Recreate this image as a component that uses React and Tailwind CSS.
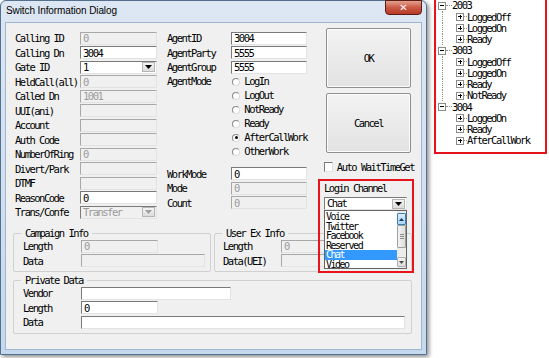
import React from "react";

const FONT = "font-['DejaVu_Sans_Mono',monospace] text-[10.5px] tracking-[-1.5px] leading-none";

// sunken text box
const Field = ({ value = "", disabled, w = "w-[77px]" }) => (
  <div
    className={`${w} h-[13px] flex items-center pl-[2px] border border-[#7a7a7a] border-b-[#e3e3e3] border-r-[#e3e3e3] ${
      disabled ? "bg-[#f0f0f0] text-[#9a9a9a] border-[#a8a8a8]" : "bg-white text-black"
    }`}
  >
    {value}
  </div>
);

const Arrow = ({ disabled }) => (
  <svg width="7" height="4" viewBox="0 0 7 4">
    <polygon points="0,0 7,0 3.5,4" fill={disabled ? "#a0a0a0" : "#000"} />
  </svg>
);

const Combo = ({ value, disabled, w = "w-[77px]" }) => (
  <div
    className={`${w} h-[13px] flex items-center justify-between pl-[2px] pr-[1px] border border-[#7a7a7a] border-b-[#e3e3e3] border-r-[#e3e3e3] ${
      disabled ? "bg-[#f0f0f0] text-[#9a9a9a]" : "bg-white text-black"
    }`}
  >
    <span>{value}</span>
    <div className="w-[13px] h-[10px] flex items-center justify-center bg-gradient-to-b from-[#f4f4f4] to-[#dcdcdc] border border-[#b5b5b5]">
      <Arrow disabled={disabled} />
    </div>
  </div>
);

const Radio = ({ label, checked }) => (
  <div className="h-[14px] flex items-center">
    <div className="ml-[2px] w-[8px] h-[8px] rounded-full bg-white border border-[#8a8a8a] border-b-[#dcdcdc] border-r-[#dcdcdc] flex items-center justify-center">
      {checked && <div className="w-[3px] h-[3px] rounded-full bg-black" />}
    </div>
    <span className="ml-[4px]">{label}</span>
  </div>
);

const leftRows = [
  { label: "Calling ID", value: "0", disabled: true },
  { label: "Calling Dn", value: "3004" },
  { label: "Gate ID", value: "1", combo: true },
  { label: "HeldCall(all)", value: "0", disabled: true },
  { label: "Called Dn", value: "1001", disabled: true },
  { label: "UUI(ani)", disabled: true },
  { label: "Account", disabled: true },
  { label: "Auth Code", disabled: true },
  { label: "NumberOfRing", value: "0", disabled: true },
  { label: "Divert/Park", disabled: true },
  { label: "DTMF", disabled: true },
  { label: "ReasonCode", value: "0" },
  { label: "Trans/Confe", value: "Transfer", combo: true, disabled: true },
];

const channels = ["Voice", "Twitter", "Facebook", "Reserved", "Chat", "Video"];

const tree = [
  { id: "2003", items: ["LoggedOff", "LoggedOn", "Ready"] },
  { id: "3003", items: ["LoggedOff", "LoggedOn", "Ready", "NotReady"] },
  { id: "3004", items: ["LoggedOn", "Ready", "AfterCallWork"] },
];

const TreeBox = ({ open }) => (
  <div className="w-[8px] h-[8px] bg-white border border-[#8c8c8c] flex items-center justify-center relative shrink-0">
    <div className="w-[4px] h-[1px] bg-black" />
    {!open && <div className="absolute w-[1px] h-[4px] bg-black" />}
  </div>
);

const Btn = ({ children }) => (
  <button className="w-[85px] h-[60px] ml-[8px] border border-[#8f8f8f] rounded-[2px] bg-gradient-to-b from-[#f3f3f3] to-[#e2e2e2] shadow-[inset_0_0_0_1px_#fcfcfc] text-black">
    {children}
  </button>
);

const Group = ({ title, className, children }) => (
  <fieldset className={`border border-[#d0d0d0] rounded-[2px] pb-[3px] ${className}`}>
    <legend className="ml-[7px] px-[4px] h-[12px] leading-[12px]">{title}</legend>
    {children}
  </fieldset>
);

export default function App() {
  return (
    <div className={`w-[549px] h-[358px] bg-white flex items-start overflow-hidden ${FONT}`}>
      {/* DIALOG */}
      <div className="w-[427px] h-[355px] flex flex-col px-[4px] pb-[4px] border border-[#54708f] rounded-t-[6px] bg-gradient-to-b from-[#dde7f3] via-[#d3e0f0] to-[#c6d8ed] shadow-[2px_2px_4px_rgba(0,0,0,0.45)]">
        {/* TITLE BAR */}
        <div className="h-[21px] flex items-start justify-between">
          <span className="pl-[1px] pt-[5px] font-['Liberation_Sans',sans-serif] text-[10px] tracking-[-0.1px] leading-none text-black">
            Switch Information Dialog
          </span>
          <div className="w-[37px] h-[15px] -mt-[1px] rounded-b-[4px] border border-[#5b1c14] bg-gradient-to-b from-[#e3a090] via-[#cb5a46] to-[#b73a25] flex items-center justify-center">
            <span className="text-white font-['DejaVu_Sans',sans-serif] font-bold text-[10px] tracking-normal leading-none">✕</span>
          </div>
        </div>

        {/* CLIENT */}
        <div className="flex-1 bg-[#f0f0f0] border border-[#9fb6d2] pt-[5px] pl-[9px]">
          <div className="flex items-start h-[199px]">
            {/* LEFT COLUMN */}
            <div className="w-[142px] mt-[3px]">
              {leftRows.map((r) => (
                <div key={r.label} className="h-[14.5px] flex items-center">
                  <span className="w-[65px] whitespace-nowrap">{r.label}</span>
                  {r.combo ? (
                    <Combo value={r.value} disabled={r.disabled} />
                  ) : (
                    <Field value={r.value} disabled={r.disabled} />
                  )}
                </div>
              ))}
            </div>

            {/* MIDDLE COLUMN */}
            <div className="w-[140px] ml-[10px] mt-[3px]">
              {[
                ["AgentID", "3004"],
                ["AgentParty", "5555"],
                ["AgentGroup", "5555"],
              ].map(([l, v]) => (
                <div key={l} className="h-[14.5px] flex items-center">
                  <span className="w-[64px]">{l}</span>
                  <Field value={v} w="w-[76px]" />
                </div>
              ))}
              <div className="flex items-start">
                <span className="w-[64px] h-[14px] flex items-center">AgentMode</span>
                <div>
                  <Radio label="LogIn" />
                  <Radio label="LogOut" />
                  <Radio label="NotReady" />
                  <Radio label="Ready" />
                  <Radio label="AfterCallWork" checked />
                  <Radio label="OtherWork" />
                </div>
              </div>
              <div className="mt-[8px]">
                {[
                  ["WorkMode", "0", false],
                  ["Mode", "0", true],
                  ["Count", "0", true],
                ].map(([l, v, d]) => (
                  <div key={l} className="h-[14.5px] flex items-center">
                    <span className="w-[64px]">{l}</span>
                    <Field value={v} disabled={d} w="w-[76px]" />
                  </div>
                ))}
              </div>
            </div>

            {/* RIGHT COLUMN */}
            <div className="w-[96px] ml-[11px]">
              <Btn>OK</Btn>
              <div className="mt-[5px]">
                <Btn>Cancel</Btn>
              </div>
              <div className="mt-[9px] h-[10px] flex items-center">
                <div className="ml-[6px] w-[10px] h-[10px] bg-white border border-[#7a7a7a] border-b-[#e3e3e3] border-r-[#e3e3e3]" />
                <span className="ml-[4px] whitespace-nowrap">Auto WaitTimeGet</span>
              </div>

              {/* LOGIN CHANNEL */}
              <div className="relative z-10 mt-[7px] pt-[3px] pl-[6px]">
                <div className="h-[12px] flex items-center">Login Channel</div>
                <div className="mt-[3px]">
                  <Combo value="Chat" w="w-[83px]" />
                </div>

                {/* open drop list */}
                <div className="absolute left-[6px] top-[31px] w-[83px] h-[59px] bg-white border border-[#646464] flex text-[10px]">
                  <div className="flex-1 pt-[1px]">
                    {channels.map((c) => (
                      <div
                        key={c}
                        className={`h-[9.5px] leading-[9.5px] pl-[1px] ${
                          c === "Chat" ? "bg-[#3399ff] text-white" : "text-black"
                        }`}
                      >
                        {c}
                      </div>
                    ))}
                  </div>
                  <div className="w-[9px] flex flex-col bg-[#ececec]">
                    <div className="h-[12px] mt-[2px] bg-gradient-to-b from-[#dcecfc] to-[#a9d4f5] border border-[#3c7fb1] rounded-[1px] flex items-center justify-center">
                      <svg width="5" height="3" viewBox="0 0 5 3">
                        <polygon points="0,3 5,3 2.5,0" fill="#1a3a5c" />
                      </svg>
                    </div>
                    <div className="h-[23px] bg-gradient-to-r from-[#f3f3f3] to-[#dedede] border border-[#a0a0a0] rounded-[1px] flex flex-col items-center justify-center gap-[1px]">
                      <div className="w-[4px] h-[1px] bg-[#8a8a8a]" />
                      <div className="w-[4px] h-[1px] bg-[#8a8a8a]" />
                      <div className="w-[4px] h-[1px] bg-[#8a8a8a]" />
                    </div>
                    <div className="flex-1" />
                    <div className="h-[10px] mb-[1px] bg-gradient-to-b from-[#f3f3f3] to-[#dedede] border border-[#b0b0b0] rounded-[1px] flex items-center justify-center">
                      <svg width="5" height="3" viewBox="0 0 5 3">
                        <polygon points="0,0 5,0 2.5,3" fill="#4a4a4a" />
                      </svg>
                    </div>
                  </div>
                </div>

                {/* red annotation */}
                <div className="absolute left-0 top-0 w-[96px] h-[94px] border-2 border-[#e8141c] pointer-events-none" />
              </div>
            </div>
          </div>

          {/* GROUPS */}
          <div className="flex ml-[-2px]">
            <Group title="Campaign Info" className="w-[198px]">
              <div className="pl-[9px]">
                <div className="h-[14.5px] flex items-center">
                  <span className="w-[58px]">Length</span>
                  <Field value="0" disabled />
                </div>
                <div className="h-[14.5px] flex items-center">
                  <span className="w-[58px]">Data</span>
                  <Field disabled w="w-[124px]" />
                </div>
              </div>
            </Group>
            <Group title="User Ex Info" className="w-[198px] ml-[3px]">
              <div className="pl-[8px]">
                <div className="h-[14.5px] flex items-center">
                  <span className="w-[58px]">Length</span>
                  <Field value="0" disabled />
                </div>
                <div className="h-[14.5px] flex items-center">
                  <span className="w-[58px]">Data(UEI)</span>
                  <Field disabled w="w-[124px]" />
                </div>
              </div>
            </Group>
          </div>

          <Group title="Private Data" className="w-[399px] ml-[-2px] mt-[2px]">
            <div className="pl-[9px]">
              <div className="h-[14.5px] flex items-center">
                <span className="w-[58px]">Vendor</span>
                <Field w="w-[150px]" />
              </div>
              <div className="h-[14.5px] flex items-center">
                <span className="w-[58px]">Length</span>
                <Field value="0" />
              </div>
              <div className="h-[14.5px] flex items-center">
                <span className="w-[58px]">Data</span>
                <Field w="w-[324px]" />
              </div>
            </div>
          </Group>
        </div>
      </div>

      {/* TREE */}
      <div className="ml-[7px] w-[113px] h-[154px] border-x-2 border-b-2 border-[#e8141c] bg-white pl-[2px]">
        <div>
          {tree.map((g, gi) => (
            <div key={g.id}>
              <div className="h-[11.25px] flex items-center">
                <TreeBox open />
                <div className="w-[6px] border-t border-dotted border-[#909090]" />
                <span>{g.id}</span>
              </div>
              {g.items.map((it) => (
                <div key={it} className="h-[11.25px] flex items-center">
                  <div className="w-[18px] h-full flex">
                    <div
                      className={`ml-[3.5px] h-full ${
                        gi < tree.length - 1 ? "border-l border-dotted border-[#909090]" : ""
                      }`}
                    />
                  </div>
                  <TreeBox />
                  <div className="w-[3px] border-t border-dotted border-[#909090]" />
                  <span className="whitespace-nowrap">{it}</span>
                </div>
              ))}
            </div>
          ))}
        </div>
      </div>
    </div>
  );
}
